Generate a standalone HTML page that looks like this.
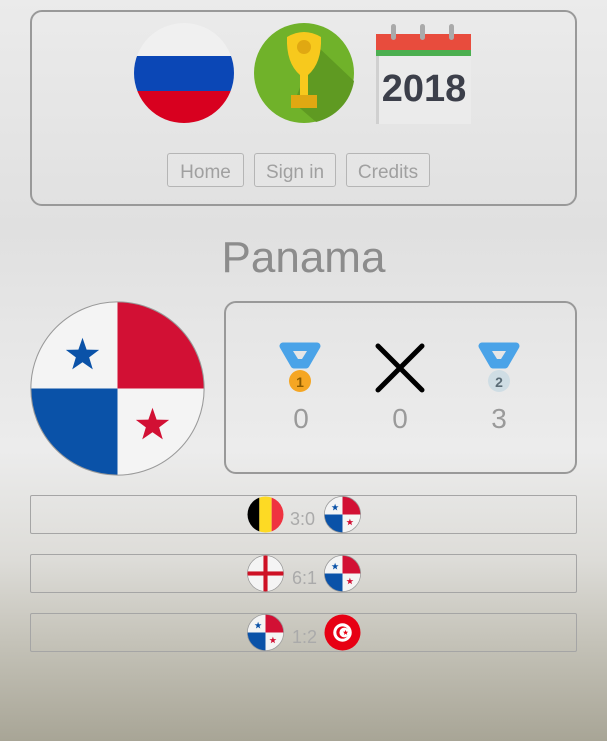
<!DOCTYPE html>
<html><head><meta charset="utf-8"><style>
html,body{margin:0;padding:0}
body{width:607px;height:741px;overflow:hidden;position:relative;font-family:"Liberation Sans",sans-serif;
background:linear-gradient(to bottom,#ebebeb 0px,#e0e0e0 230px,#e6e6e6 330px,#ececec 450px,#dddcd8 560px,#c5c3b9 640px,#a8a596 741px);}
.box{position:absolute;border:2px solid #999;border-radius:12px;box-sizing:border-box}
.btn{position:absolute;top:153px;height:34px;border:1px solid #b5b5b5;border-radius:3px;box-sizing:border-box;color:#a0a0a0;font-size:19px;line-height:38px;text-align:center;background:rgba(255,255,255,0.1)}
.row{position:absolute;left:30px;width:547px;height:39px;border:1px solid #a5a5a5;border-radius:2px;box-sizing:border-box}
.sc{position:absolute;top:10px;color:#aaa;font-size:18px}
.n{position:absolute;top:403px;color:#9a9a9a;font-size:28px;width:40px;text-align:center}
svg{position:absolute}
</style></head><body>
<div class="box" style="left:30px;top:10px;width:547px;height:196px"></div>
<svg style="left:134px;top:23px" width="100" height="100" viewBox="0 0 100 100"><defs><clipPath id="c1"><circle cx="50" cy="50" r="50"/></clipPath></defs><g clip-path="url(#c1)"><rect width="100" height="33" fill="#f0f0f0"/><rect y="33" width="100" height="35" fill="#0b47b6"/><rect y="68" width="100" height="32" fill="#d8001f"/></g></svg>
<svg style="left:254px;top:23px" width="100" height="100" viewBox="0 0 100 100"><circle cx="50" cy="50" r="50" fill="#70b22a"/><path d="M62 22 L100 58 A50 50 0 0 1 62 99 L40 80Z" fill="#5f9a22"/><path d="M33 14 Q50 4 67 14 Q68 40 54 52 L54 72 L46 72 L46 52 Q32 40 33 14Z" fill="#f7c91d"/><circle cx="50" cy="24" r="7" fill="#e0a812"/><rect x="37" y="72" width="26" height="13" fill="#e0a812"/></svg>
<svg style="left:376px;top:22px" width="96" height="102" viewBox="0 0 96 102"><rect x="0" y="12" width="95" height="90" fill="#ebebeb"/><rect x="0" y="12" width="3" height="90" fill="#d0d0d0"/><rect x="0" y="12" width="95" height="16" fill="#e84c3d"/><rect x="0" y="28" width="95" height="6" fill="#4caf50"/><rect x="15" y="2" width="5" height="16" rx="2.5" fill="#aaa"/><rect x="44" y="2" width="5" height="16" rx="2.5" fill="#aaa"/><rect x="73" y="2" width="5" height="16" rx="2.5" fill="#aaa"/><text x="48" y="79" text-anchor="middle" font-family="Liberation Sans Narrow,Liberation Sans,sans-serif" font-weight="bold" font-size="38" fill="#3c3f4a">2018</text></svg>
<div class="btn" style="left:167px;width:77px">Home</div>
<div class="btn" style="left:254px;width:82px">Sign in</div>
<div class="btn" style="left:346px;width:84px">Credits</div>
<div style="position:absolute;left:0;width:607px;top:233px;text-align:center;font-size:44px;color:#8c8c8c">Panama</div>
<svg style="left:30px;top:301px" width="175" height="175" viewBox="0 0 100 100"><defs><clipPath id="cp"><circle cx="50" cy="50" r="49.5"/></clipPath><path id="st" d="M0 -10 L2.35 -3.24 L9.51 -3.09 L3.8 1.24 L5.88 8.09 L0 4 L-5.88 8.09 L-3.8 1.24 L-9.51 -3.09 L-2.35 -3.24Z"/></defs><g clip-path="url(#cp)"><rect width="100" height="100" fill="#f4f4f4"/><rect x="50" width="50" height="50" fill="#d21034"/><rect y="50" width="50" height="50" fill="#0a52a8"/><use href="#st" x="30" y="31" fill="#0a52a8"/><use href="#st" x="70" y="71" fill="#d21034"/></g><circle cx="50" cy="50" r="49.5" fill="none" stroke="#999" stroke-width="0.6"/></svg>
<div class="box" style="left:224px;top:301px;width:353px;height:173px"></div>
<svg style="left:279px;top:341px" width="44" height="52" viewBox="0 0 44 52"><path d="M4 5 H38 L27 24 H15Z" fill="#4aa3e8" stroke="#4aa3e8" stroke-width="7" stroke-linejoin="round"/><path d="M14 10 H28 L23 18 H19Z" fill="#e6e6e6"/><circle cx="21" cy="40" r="11" fill="#f5a623"/><text x="21" y="46" text-anchor="middle" font-size="14" font-weight="bold" fill="#8a5a00" font-family="Liberation Sans">1</text></svg>
<svg style="left:374px;top:342px" width="52" height="52" viewBox="0 0 52 52"><path d="M4 4 L48 48 M48 4 L4 48" stroke="#000" stroke-width="5" stroke-linecap="round"/></svg>
<svg style="left:478px;top:341px" width="44" height="52" viewBox="0 0 44 52"><path d="M4 5 H38 L27 24 H15Z" fill="#4aa3e8" stroke="#4aa3e8" stroke-width="7" stroke-linejoin="round"/><path d="M14 10 H28 L23 18 H19Z" fill="#e6e6e6"/><circle cx="21" cy="40" r="11" fill="#cfdde4"/><text x="21" y="46" text-anchor="middle" font-size="14" font-weight="bold" fill="#5b6c76" font-family="Liberation Sans">2</text></svg>
<div class="n" style="left:281px">0</div><div class="n" style="left:380px">0</div><div class="n" style="left:479px">3</div>

<div class="row" style="top:495px"></div>
<div class="row" style="top:554px"></div>
<div class="row" style="top:613px"></div>

<svg style="left:247px;top:496px" width="37" height="37" viewBox="0 0 36 36"><defs><clipPath id="cb"><circle cx="18" cy="18" r="17.5"/></clipPath></defs><g clip-path="url(#cb)"><rect width="12" height="36" fill="#000"/><rect x="12" width="12" height="36" fill="#fdda24"/><rect x="24" width="12" height="36" fill="#ef3340"/></g></svg>
<div class="sc" style="left:290px;top:509px">3:0</div>
<svg style="left:324px;top:496px" width="37" height="37" viewBox="0 0 100 100"><g clip-path="url(#cp)"><rect width="100" height="100" fill="#f4f4f4"/><rect x="50" width="50" height="50" fill="#d21034"/><rect y="50" width="50" height="50" fill="#0a52a8"/><use href="#st" x="30" y="31" fill="#0a52a8"/><use href="#st" x="70" y="71" fill="#d21034"/></g><circle cx="50" cy="50" r="49" fill="none" stroke="#999" stroke-width="2"/></svg>

<svg style="left:247px;top:555px" width="37" height="37" viewBox="0 0 36 36"><circle cx="18" cy="18" r="17.5" fill="#f4f4f4" stroke="#999" stroke-width="0.7"/><g clip-path="url(#cb)"><rect x="16" width="4" height="36" fill="#ce1124"/><rect y="16" width="36" height="4" fill="#ce1124"/></g></svg>
<div class="sc" style="left:292px;top:568px">6:1</div>
<svg style="left:324px;top:555px" width="37" height="37" viewBox="0 0 100 100"><g clip-path="url(#cp)"><rect width="100" height="100" fill="#f4f4f4"/><rect x="50" width="50" height="50" fill="#d21034"/><rect y="50" width="50" height="50" fill="#0a52a8"/><use href="#st" x="30" y="31" fill="#0a52a8"/><use href="#st" x="70" y="71" fill="#d21034"/></g><circle cx="50" cy="50" r="49" fill="none" stroke="#999" stroke-width="2"/></svg>

<svg style="left:247px;top:614px" width="37" height="37" viewBox="0 0 100 100"><g clip-path="url(#cp)"><rect width="100" height="100" fill="#f4f4f4"/><rect x="50" width="50" height="50" fill="#d21034"/><rect y="50" width="50" height="50" fill="#0a52a8"/><use href="#st" x="30" y="31" fill="#0a52a8"/><use href="#st" x="70" y="71" fill="#d21034"/></g><circle cx="50" cy="50" r="49" fill="none" stroke="#999" stroke-width="2"/></svg>
<div class="sc" style="left:292px;top:627px">1:2</div>
<svg style="left:324px;top:614px" width="37" height="37" viewBox="0 0 36 36"><circle cx="18" cy="18" r="17.5" fill="#e70013"/><circle cx="18" cy="18" r="9" fill="#fff"/><circle cx="18" cy="18" r="6" fill="#e70013"/><circle cx="19.8" cy="18" r="4.8" fill="#fff"/><path d="M21 15.5 L21.7 17.3 L23.6 17.3 L22.1 18.5 L22.6 20.3 L21 19.2 L19.4 20.3 L19.9 18.5 L18.4 17.3 L20.3 17.3Z" fill="#e70013"/></svg>
</body></html>
